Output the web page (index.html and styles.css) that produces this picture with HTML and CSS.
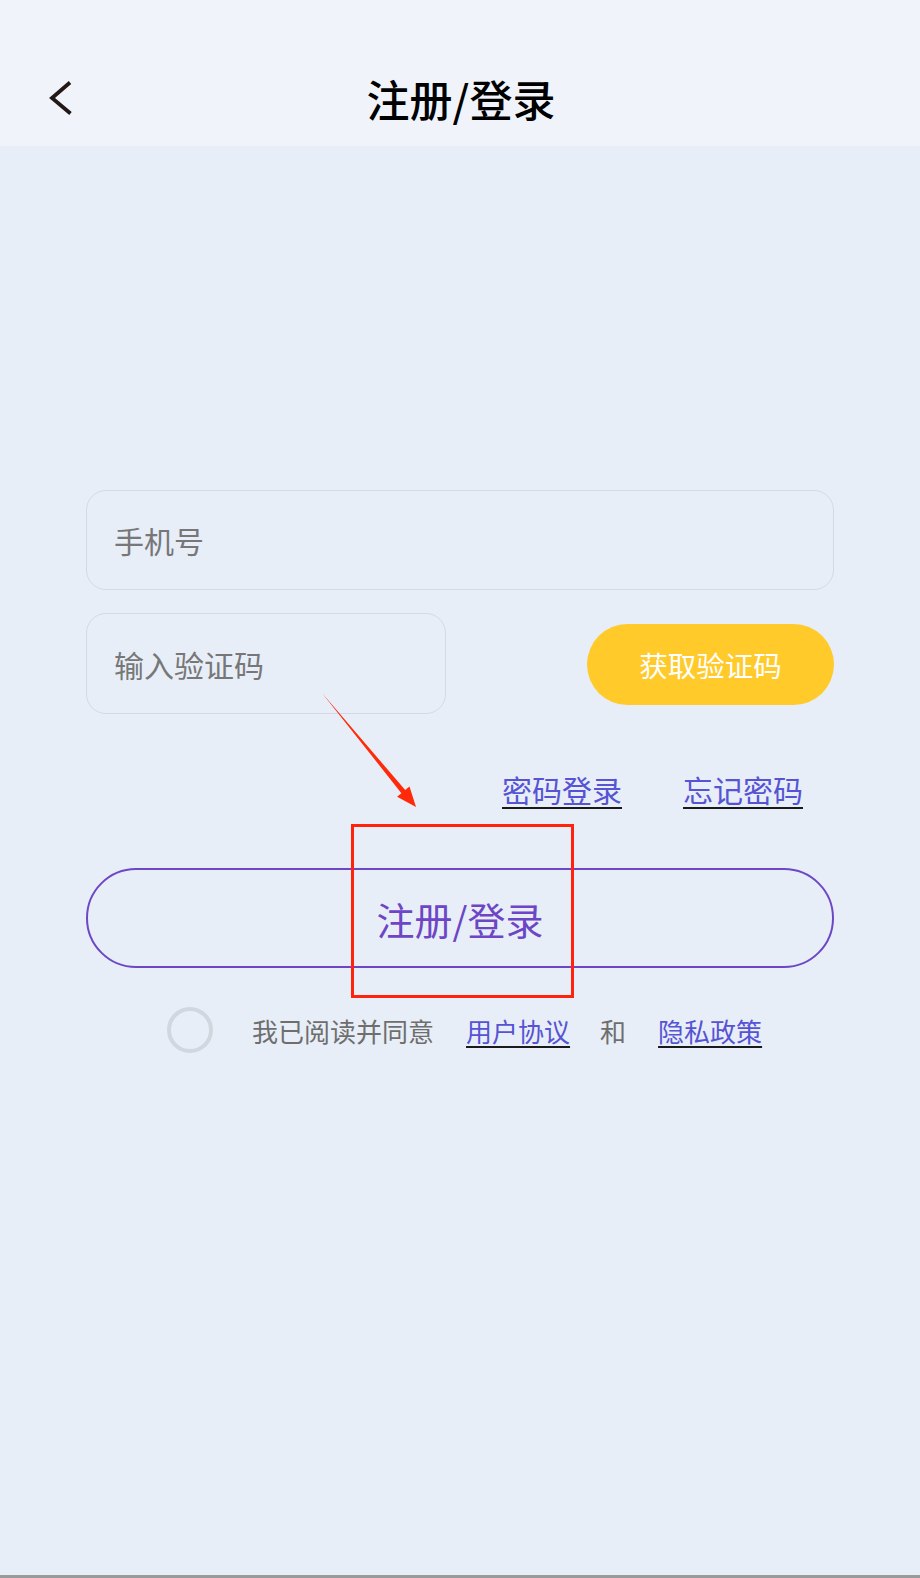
FILE: index.html
```html
<!DOCTYPE html>
<html lang="zh-CN">
<head>
<meta charset="utf-8">
<title>注册/登录</title>
<link rel="stylesheet" href="styles.css">
</head>
<body>
<div class="page">
  <header class="header">
    <div class="nav">
      <button class="back" aria-label="返回">
        <svg width="40" height="40" viewBox="0 0 40 40"><polyline points="30,3.5 12,19 30.5,34.5" fill="none" stroke="#231815" stroke-width="3.8" stroke-linejoin="miter"/></svg>
      </button>
      <h1 class="title">注册/登录</h1>
    </div>
  </header>
  <main class="main">
    <form class="form">
      <input class="field field-phone" type="text" placeholder="手机号">
      <div class="code-row">
        <input class="field field-code" type="text" placeholder="输入验证码">
        <button type="button" class="btn-code">获取验证码</button>
      </div>
      <div class="links">
        <a class="link" href="#">密码登录</a>
        <a class="link" href="#">忘记密码</a>
      </div>
      <button type="button" class="btn-submit">注册/登录</button>
      <div class="agree">
        <span class="radio"></span>
        <span class="agree-text">我已阅读并同意</span>
        <a class="agree-link" href="#">用户协议</a>
        <span class="agree-text">和</span>
        <a class="agree-link" href="#">隐私政策</a>
      </div>
    </form>
  </main>
  <div class="mark-box"></div>
  <svg class="mark-arrow" width="130" height="140" viewBox="0 0 130 140">
    <polygon points="22,13 105.2,110 109.5,106.5 116,127 97.1,116.7 101.4,113.2" fill="#ff2a0a"/>
  </svg>
</div>
</body>
</html>
```

FILE: styles.css
```css
html, body {
  margin: 0;
  padding: 0;
}
body {
  width: 920px;
  height: 1578px;
  background: #e7eef7;
  font-family: "Noto Sans CJK SC", "Noto Sans", sans-serif;
  overflow: hidden;
}
.page {
  position: relative;
  height: 1575px;
  border-bottom: 3px solid #9a9a9a;
  background: #e7eef7;
  display: flex;
  flex-direction: column;
}
.header {
  height: 146px;
  box-sizing: border-box;
  padding-top: 50px;
  background: #f0f4fa;
}
.nav {
  position: relative;
  height: 96px;
  display: flex;
  align-items: center;
  justify-content: center;
}
.back {
  position: absolute;
  left: 40px;
  top: 29px;
  width: 40px;
  height: 40px;
  padding: 0;
  border: 0;
  background: none;
}
.back svg {
  display: block;
}
.title {
  margin: 0;
  font-size: 43px;
  font-weight: 500;
  color: #000;
  line-height: 1;
  padding-left: 2px;
}
.main {
  padding: 0 86px;
}
.form {
  margin-top: 344px;
  display: flex;
  flex-direction: column;
}
.field {
  box-sizing: border-box;
  height: 100px;
  border: 1px solid #d2dae6;
  border-radius: 20px;
  background: #e7eef7;
  padding: 0 0 0 27px;
  font-family: "Noto Sans CJK SC", "Noto Sans", sans-serif;
  font-size: 30px;
  color: #333;
  outline: none;
}
.field::placeholder {
  color: #777;
}
.field-phone {
  width: 748px;
}
.code-row {
  margin-top: 23px;
  display: flex;
  align-items: center;
  justify-content: space-between;
}
.field-code {
  width: 360px;
  height: 101px;
}
.btn-code {
  width: 247px;
  height: 81px;
  margin-top: 1px;
  border: 0;
  border-radius: 41px;
  background: #ffca2a;
  color: #fff;
  font-family: "Noto Sans CJK SC", "Noto Sans", sans-serif;
  font-size: 28.5px;
  padding: 0;
}
.links {
  margin-top: 55px;
  display: flex;
  justify-content: flex-end;
  gap: 61px;
  padding-right: 31px;
  line-height: 40px;
}
.link {
  font-size: 30px;
  color: #5653d4;
  text-decoration: underline;
  text-decoration-color: #1a1a1a;
  text-decoration-thickness: 2px;
  text-underline-offset: 5px;
}
.btn-submit {
  margin-top: 59px;
  width: 748px;
  height: 100px;
  box-sizing: border-box;
  border: 2.5px solid #6e47c6;
  border-radius: 50px;
  background: transparent;
  color: #6d45c5;
  font-family: "Noto Sans CJK SC", "Noto Sans", sans-serif;
  font-size: 38px;
  padding: 0;
}
.agree {
  margin-top: 39px;
  margin-left: 81px;
  display: flex;
  align-items: center;
  height: 46px;
  font-size: 26px;
}
.radio {
  width: 46px;
  height: 46px;
  box-sizing: border-box;
  border: 4px solid #d1d7df;
  border-radius: 50%;
  margin-right: 39px;
}
.agree-text {
  color: #6e6e6e;
  margin-right: 32px;
}
.agree-link {
  color: #5653d4;
  text-decoration: underline;
  text-decoration-color: #1a1a1a;
  text-decoration-thickness: 2px;
  text-underline-offset: 4px;
  margin-right: 30px;
}
.mark-box {
  position: absolute;
  left: 351px;
  top: 824px;
  width: 223px;
  height: 174px;
  box-sizing: border-box;
  border: 3px solid #ff230d;
}
.mark-arrow {
  position: absolute;
  left: 300px;
  top: 680px;
}
```
